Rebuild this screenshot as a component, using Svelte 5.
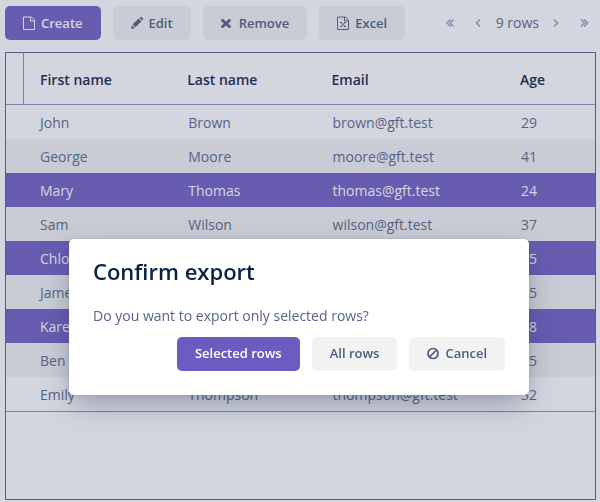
<script>
  const columns = ['First name', 'Last name', 'Email', 'Age'];
  const people = [
    { first: 'John', last: 'Brown', email: 'brown@gft.test', age: 29 },
    { first: 'George', last: 'Moore', email: 'moore@gft.test', age: 41 },
    { first: 'Mary', last: 'Thomas', email: 'thomas@gft.test', age: 24, selected: true },
    { first: 'Sam', last: 'Wilson', email: 'wilson@gft.test', age: 37 },
    { first: 'Chloe', last: 'Taylor', email: 'taylor@gft.test', age: 35, selected: true },
    { first: 'James', last: 'Davis', email: 'davis@gft.test', age: 25 },
    { first: 'Karen', last: 'White', email: 'white@gft.test', age: 28, selected: true },
    { first: 'Ben', last: 'Harris', email: 'harris@gft.test', age: 45 },
    { first: 'Emily', last: 'Thompson', email: 'thompson@gft.test', age: 32 }
  ];
  let open = $state(true);
  const close = () => (open = false);
</script>

<main class="page">
  <div class="toolbar">
    <div class="actions">
      <button class="btn primary" type="button">
        <svg viewBox="0 0 14 14" aria-hidden="true"><path d="M8.500 1H.5v12.500h11V4zM7.500 1v4h4" fill="none" stroke="currentColor" /></svg>
        Create
      </button>
      <button class="btn" type="button">
        <svg viewBox="0 0 14 14" aria-hidden="true"><path d="M0 13l1-4 3 3zM1.700 8.300l6-5.800 2.800 2.800-6 6zM8.500 1.800l.8-.7c.4-.3.8-.3 1.200 0L12 2.500c.3.400.3.800 0 1.200l-.8.800z" fill="currentColor" /></svg>
        Edit
      </button>
      <button class="btn" type="button">
        <svg viewBox="0 0 14 14" aria-hidden="true"><path d="M.5 3.500h2L5 6l2.500-2.500h2v1.500L7 7.500 9.500 10v1.500h-2L5 9l-2.500 2.500h-2V10L3 7.500.5 5z" fill="currentColor" stroke="currentColor" stroke-linejoin="round" stroke-width=".6" /></svg>
        Remove
      </button>
      <button class="btn" type="button">
        <svg viewBox="0 0 14 14" aria-hidden="true"><path d="M8.500 1H.5v12.500h11V4zM7.500 1v4h4" fill="none" stroke="currentColor" /><path d="M3 6.500h2M7 6.500h2M3 10.500h2M7 10.500h2M4 6.500l4 4M8 6.500l-4 4" fill="none" stroke="currentColor" /></svg>
        Excel
      </button>
    </div>
    <nav class="pager" aria-label="Pages">
      <button type="button" aria-label="First page"><svg viewBox="0 0 10 10" aria-hidden="true"><path d="M4.500 1.500L1 5l3.500 3.500M7.500 1.500L4 5l3.500 3.500" /></svg></button>
      <button type="button" aria-label="Previous page"><svg viewBox="0 0 10 10" aria-hidden="true"><path d="M6 1.500L2.500 5 6 8.500" /></svg></button>
      <span>9 rows</span>
      <button type="button" aria-label="Next page"><svg viewBox="0 0 10 10" aria-hidden="true"><path d="M3 1.500L6.500 5 3 8.500" /></svg></button>
      <button type="button" aria-label="Last page"><svg viewBox="0 0 10 10" aria-hidden="true"><path d="M2 1.500L5.500 5 2 8.500M5 1.500L8.500 5 5 8.500" /></svg></button>
    </nav>
  </div>

  <div class="grid">
    <table>
      <colgroup>
        <col class="c-mark" /><col class="c-first" /><col class="c-last" /><col class="c-email" /><col />
      </colgroup>
      <thead>
        <tr>
          <td class="mark"></td>
          {#each columns as name}<th scope="col">{name}</th>{/each}
        </tr>
      </thead>
      <tbody>
        {#each people as p}
          <tr class:selected={p.selected}>
            <td></td><td>{p.first}</td><td>{p.last}</td><td>{p.email}</td><td>{p.age}</td>
          </tr>
        {/each}
      </tbody>
    </table>
  </div>
</main>

{#if open}
  <div class="overlay">
    <div class="dialog" role="dialog" aria-modal="true" aria-labelledby="dlg-title">
      <h2 id="dlg-title">Confirm export</h2>
      <p>Do you want to export only selected rows?</p>
      <div class="choices">
        <button class="btn primary" type="button" onclick={close}>Selected rows</button>
        <button class="btn" type="button" onclick={close}>All rows</button>
        <button class="btn" type="button" onclick={close}>
          <svg viewBox="0 0 14 14" aria-hidden="true"><path d="M11 7.500a5 5 0 1 1-10 0 5 5 0 0 1 10 0zM2.500 11l7-7" fill="none" stroke="currentColor" stroke-width="1.700" /></svg>
          Cancel
        </button>
      </div>
    </div>
  </div>
{/if}

<style>
  :global(body) {
    margin: 0;
    background: #fff;
  }
  .page,
  .overlay {
    box-sizing: border-box;
    font: 14px/22px 'Open Sans', 'Noto Sans', sans-serif;
    color: #56648a;
  }
  .page {
    min-height: 100vh;
    display: flex;
    flex-direction: column;
    gap: 12px;
    padding: 6px 4px 2px 5px;
  }
  .toolbar {
    display: flex;
    justify-content: space-between;
    align-items: center;
  }
  .actions,
  .choices {
    display: flex;
    gap: 12px;
  }
  .btn {
    height: 34px;
    padding: 0 18px;
    border: 0;
    border-radius: 5px;
    display: flex;
    align-items: center;
    gap: 4px;
    background: #f2f2f2;
    color: #4d5b80;
    font: 600 13px/20px 'Open Sans', 'Noto Sans', sans-serif;
    white-space: nowrap;
  }
  .choices .btn {
    padding-bottom: 2px;
  }
  .btn svg {
    width: 14px;
    height: 14px;
  }
  .primary {
    background: #6e5bc2;
    color: #fff;
  }
  .pager {
    display: flex;
    align-items: center;
    gap: 12px;
    padding-right: 4px;
  }
  .pager button {
    display: flex;
    padding: 3px;
    border: 0;
    background: none;
    color: #8b97b8;
  }
  .pager svg {
    width: 10px;
    height: 10px;
    fill: none;
    stroke: currentColor;
    stroke-width: 1.4;
  }
  .pager span {
    margin: 0 -3px;
  }
  .grid {
    flex: 1;
    border: 1px solid #4c5f86;
  }
  table {
    width: 100%;
    table-layout: fixed;
    border-collapse: separate;
    border-spacing: 0;
  }
  .c-mark {
    width: 18px;
  }
  .c-first {
    width: 25%;
  }
  .c-last {
    width: 24.5%;
  }
  .c-email {
    width: 32%;
  }
  th,
  td {
    box-sizing: border-box;
    padding: 2px 0 0 16px;
    text-align: left;
    white-space: nowrap;
  }
  thead th,
  thead td {
    height: 52px;
    border-bottom: 1px solid #8792b0;
    font-weight: 600;
    color: #0a2045;
  }
  thead .mark {
    border-right: 1px solid #8792b0;
  }
  tbody td {
    height: 34px;
  }
  tbody td + td + td {
    padding-left: 17px;
  }
  tbody tr:nth-child(even) {
    background: #f2f2f2;
  }
  tbody tr.selected {
    background: #6e5bc2;
    color: #fff;
  }
  tbody tr:last-child td {
    height: 35px;
    border-bottom: 1px solid #8792b0;
  }
  .overlay {
    position: fixed;
    inset: 0;
    display: flex;
    justify-content: center;
    align-items: flex-start;
    padding: 239px 2px 0 0;
    background: rgba(85, 97, 128, 0.26);
  }
  .dialog {
    box-sizing: border-box;
    width: 460px;
    max-width: 100%;
    padding: 16px 24px 24px;
    border-radius: 5px;
    background: #fff;
    box-shadow:
      0 0 4px rgba(24, 39, 75, 0.15),
      0 12px 32px -4px rgba(24, 39, 75, 0.35);
  }
  h2 {
    margin: 0 0 18px;
    font-size: 22px;
    line-height: 32px;
    font-weight: 600;
    color: #0a2045;
  }
  p {
    margin: 0 0 10px;
  }
  .choices {
    justify-content: flex-end;
  }
</style>
